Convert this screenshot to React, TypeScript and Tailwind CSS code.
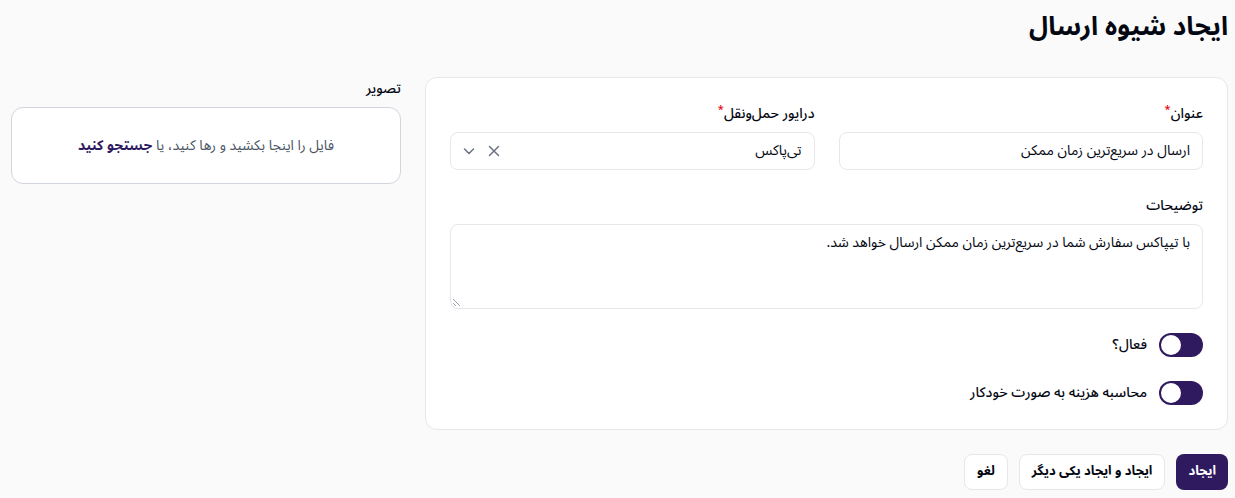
import React from "react";

const font = { fontFamily: '"Noto Sans Arabic", "DejaVu Sans", sans-serif' };

function Label({ children, required }: { children: React.ReactNode; required?: boolean }) {
  return (
    <label className="block text-sm leading-6 font-medium text-gray-950">
      {children}
      {required && <sup className="text-red-600 text-[11px] font-medium">*</sup>}
    </label>
  );
}

function Toggle({ label }: { label: string }) {
  return (
    <div className="flex items-center gap-3">
      <button
        type="button"
        className="relative inline-flex h-6 w-11 shrink-0 rounded-full bg-[#2f1a5f]"
      >
        <span className="absolute left-[2px] top-[2px] h-5 w-5 rounded-full bg-white" />
      </button>
      <span className="text-sm leading-6 font-medium text-gray-950">{label}</span>
    </div>
  );
}

export default function App() {
  return (
    <div dir="rtl" style={font} className="min-h-[498px] bg-[#fafafa] pr-[7px] pl-[11px] pt-[8px] pb-4">
      <h1 className="text-[26px] leading-[38px] font-bold text-gray-950">ایجاد شیوه ارسال</h1>

      <div className="mt-[31px] flex gap-6 items-start">
        {/* main form card */}
        <div className="w-[803px] shrink-0 rounded-xl border border-gray-200 bg-white p-6 flex flex-col gap-6">
          <div className="grid grid-cols-2 gap-6">
            <div className="flex flex-col gap-1.5">
              <Label required>عنوان</Label>
              <div className="h-[38px] rounded-lg border border-gray-200 bg-white flex items-center px-3 text-sm text-gray-950">
                ارسال در سریع‌ترین زمان ممکن
              </div>
            </div>
            <div className="flex flex-col gap-1.5">
              <Label required>درایور حمل‌ونقل</Label>
              <div className="h-[38px] rounded-lg border border-gray-200 bg-white flex items-center px-3 text-sm text-gray-950">
                <span className="flex-1">تی‌پاکس</span>
                <svg width="12" height="12" viewBox="0 0 12 12" fill="none" stroke="#6b7280" strokeWidth="1.5" strokeLinecap="round" className="ml-[13px]">
                  <path d="M1.5 1.5l9 9M10.5 1.5l-9 9" />
                </svg>
                <svg width="12" height="12" viewBox="0 0 12 12" fill="none" stroke="#6b7280" strokeWidth="1.5" strokeLinecap="round" strokeLinejoin="round">
                  <path d="M1.5 4l4.5 4.5L10.5 4" />
                </svg>
              </div>
            </div>
          </div>

          <div className="flex flex-col gap-1.5">
            <Label>توضیحات</Label>
            <div className="relative h-[85px] rounded-lg border border-gray-200 bg-white px-3 py-[6px] text-sm leading-6 text-gray-950">
              با تیپاکس سفارش شما در سریع‌ترین زمان ممکن ارسال خواهد شد.
              <svg width="9" height="9" viewBox="0 0 9 9" className="absolute left-[1px] bottom-[1px]" stroke="#9ca3af" strokeWidth="1">
                <path d="M1 1l7 7M1 5l3 3" />
              </svg>
            </div>
          </div>

          <Toggle label="فعال؟" />
          <Toggle label="محاسبه هزینه به صورت خودکار" />
        </div>

        {/* image upload column */}
        <div className="flex-1 flex flex-col gap-1.5">
          <Label>تصویر</Label>
          <div className="h-[77px] rounded-xl border border-gray-300 bg-white flex items-center justify-center text-sm text-gray-600">
            <span>
              فایل را اینجا بکشید و رها کنید، یا <span className="font-bold text-[#2f1a5f]">جستجو کنید</span>
            </span>
          </div>
        </div>
      </div>

      <div className="mt-6 flex gap-[11px]">
        <button className="h-9 px-3 rounded-lg bg-[#2f1a5f] text-white text-[13px] font-bold">ایجاد</button>
        <button className="h-9 px-3 rounded-lg border border-gray-200 bg-white text-gray-950 text-[13px] font-bold">ایجاد و ایجاد یکی دیگر</button>
        <button className="h-9 px-3 rounded-lg border border-gray-200 bg-white text-gray-950 text-[13px] font-bold">لغو</button>
      </div>
    </div>
  );
}
